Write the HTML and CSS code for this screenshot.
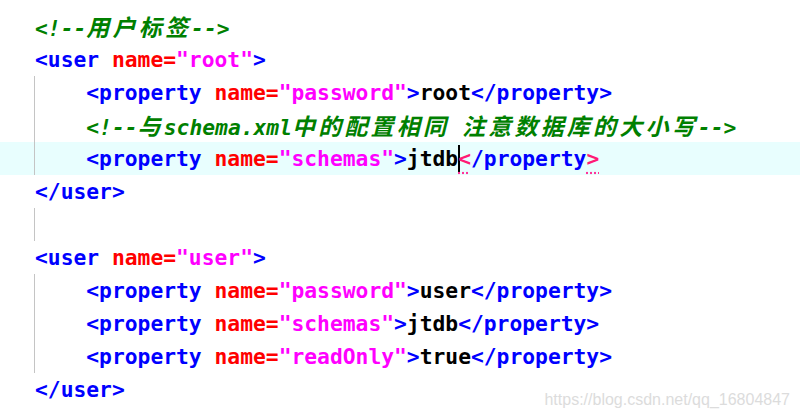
FILE: index.html
```html
<!DOCTYPE html>
<html lang="zh">
<head>
<meta charset="utf-8">
<title>schema.xml</title>
<link rel="stylesheet" href="styles.css">
</head>
<body>
<div class="editor">
  <div class="line d1"><span class="c">&lt;!--<span class="cjk">用户标签</span>--&gt;</span></div>
  <div class="line d1"><span class="t">&lt;user</span> <span class="a">name=</span><span class="v">"root"</span><span class="t">&gt;</span></div>
  <div class="line d2 g"><span class="t">&lt;property</span> <span class="a">name=</span><span class="v">"password"</span><span class="t">&gt;</span>root<span class="t">&lt;/property&gt;</span></div>
  <div class="line d2 g"><span class="c">&lt;!--<span class="cjk">与</span>schema.xml<span class="cjk">中的配置相同</span> <span class="cjk">注意数据库的大小写</span>--&gt;</span></div>
  <div class="line d2 g cur"><span class="t">&lt;property</span> <span class="a">name=</span><span class="v">"schemas"</span><span class="t">&gt;</span>jtdb<span class="caret"></span><span class="m">&lt;</span><span class="t">/property</span><span class="m">&gt;</span></div>
  <div class="line d1"><span class="t">&lt;/user&gt;</span></div>
  <div class="line d1 g"></div>
  <div class="line d1"><span class="t">&lt;user</span> <span class="a">name=</span><span class="v">"user"</span><span class="t">&gt;</span></div>
  <div class="line d2 g"><span class="t">&lt;property</span> <span class="a">name=</span><span class="v">"password"</span><span class="t">&gt;</span>user<span class="t">&lt;/property&gt;</span></div>
  <div class="line d2 g"><span class="t">&lt;property</span> <span class="a">name=</span><span class="v">"schemas"</span><span class="t">&gt;</span>jtdb<span class="t">&lt;/property&gt;</span></div>
  <div class="line d2 g"><span class="t">&lt;property</span> <span class="a">name=</span><span class="v">"readOnly"</span><span class="t">&gt;</span>true<span class="t">&lt;/property&gt;</span></div>
  <div class="line d1"><span class="t">&lt;/user&gt;</span></div>
</div>
<div class="watermark">https://blog.csdn.net/qq_16804847</div>
</body>
</html>
```
FILE: styles.css
```css
html, body {
  margin: 0;
  padding: 0;
  background: #ffffff;
  height: 100%;
  overflow: hidden;
}
body {
  position: relative;
  width: 800px;
  height: 415px;
}
.editor {
  padding-top: 10px;
  font-family: "DejaVu Sans Mono", "Liberation Mono", monospace;
  font-weight: bold;
  font-size: 21.3px;
  line-height: 33px;
  color: #000000;
}
.line {
  height: 33px;
  white-space: pre;
}
.d1 { padding-left: 35px; }
.d2 { padding-left: calc(35px + 4ch); }
.g {
  background-image: linear-gradient(#c4c4c4, #c4c4c4);
  background-repeat: no-repeat;
  background-position: 34px 0;
  background-size: 1px 100%;
}
.cur {
  background-color: #e8fefe;
}
.t { color: #0000ff; }
.a { color: #ff0000; }
.v { color: #ff00ff; }
.c { color: #008000; font-style: italic; }
.cjk {
  font-family: "Noto Sans CJK SC", sans-serif;
  font-size: 23px;
  font-weight: bold;
  letter-spacing: 3.2px;
}
.m {
  color: #ff1a75;
  text-decoration: underline dotted #ff3399;
  text-underline-offset: 6px;
}
.caret {
  display: inline-block;
  width: 0;
  height: 28px;
  border-left: 2px solid #000000;
  margin-right: -2px;
  vertical-align: -7px;
}
.watermark {
  position: absolute;
  right: 10px;
  bottom: 6px;
  font-family: "Liberation Sans", Arial, sans-serif;
  font-size: 16px;
  color: #dcdcdc;
}
```
